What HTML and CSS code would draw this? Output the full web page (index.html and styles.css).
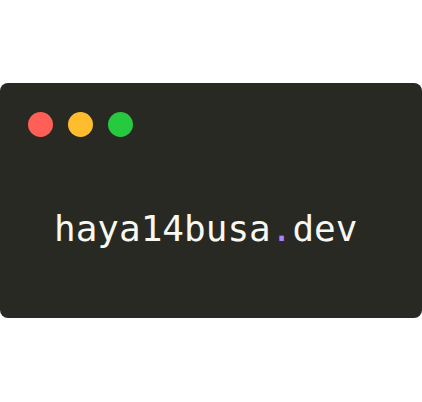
FILE: index.html
```html
<!DOCTYPE html>
<html>
<head>
<meta charset="utf-8">
<link rel="stylesheet" href="styles.css">
</head>
<body>
<div class="card">
  <div class="dots">
    <span class="dot red"></span>
    <span class="dot yellow"></span>
    <span class="dot green"></span>
  </div>
  <div class="title">haya14busa<span class="accent">.</span>dev</div>
</div>
</body>
</html>
```
FILE: styles.css
```css
html, body {
  margin: 0;
  padding: 0;
  background: #ffffff;
}
.card {
  margin-top: 83px;
  height: 235px;
  box-sizing: border-box;
  background: #282923;
  border-radius: 8px;
  padding: 29px 0 0 28px;
}
.dots {
  display: flex;
  gap: 15px;
}
.dot {
  width: 25px;
  height: 25px;
  border-radius: 50%;
  display: block;
}
.red { background: #ff5f56; }
.yellow { background: #ffbd2e; }
.green { background: #27c93f; }
.title {
  margin-top: 74px;
  padding-left: 26px;
  font-family: "DejaVu Sans Mono", monospace;
  font-size: 36px;
  line-height: 36px;
  color: #f8f8f2;
  white-space: nowrap;
}
.accent { color: #ae81ff; }
```
